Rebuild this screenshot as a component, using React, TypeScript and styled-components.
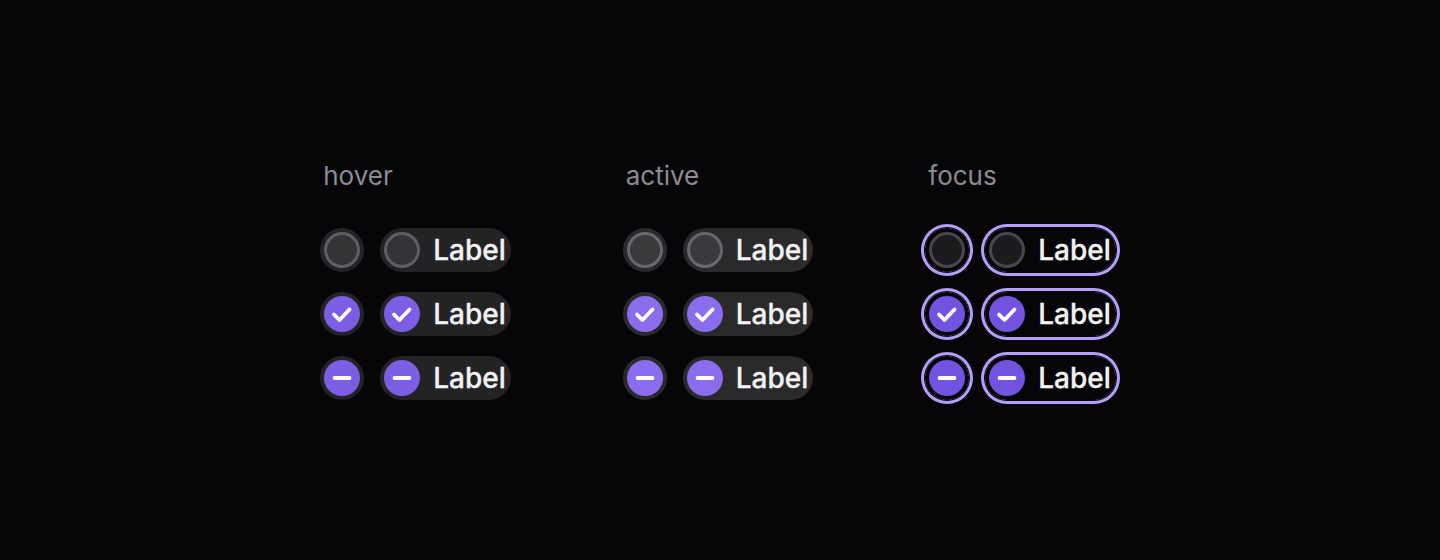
import React from 'react';
import styled, { createGlobalStyle, css } from 'styled-components';

type Variant = 'hover' | 'active' | 'focus';
type Check = 'unchecked' | 'checked' | 'indeterminate';

const PALETTE = {
  hover: { halo: '#232325', fill: '#343437', ring: '#5e5e62', purple: '#7d5de3' },
  active: { halo: '#2a2a2c', fill: '#3a3a3d', ring: '#68686c', purple: '#8a6cec' },
  focus: { halo: 'transparent', fill: '#1b1b1d', ring: '#48484c', purple: '#7452e0' },
} as const;

const FOCUS_RING = '#b39ff8';

const GlobalStyle = createGlobalStyle`
  html, body {
    margin: 0;
    padding: 0;
    background: #060608;
  }
  body {
    font-family: Inter, "Noto Sans", "Liberation Sans", sans-serif;
    -webkit-font-smoothing: antialiased;
  }
`;

const StyledPage = styled.div`
  min-height: 100vh;
  display: flex;
  align-items: center;
  justify-content: center;
  gap: 112px;
  padding-right: 4px;
  box-sizing: border-box;
`;

const StyledColumn = styled.section`
  display: flex;
  flex-direction: column;
`;

const StyledHeading = styled.h3`
  margin: 0 0 36px;
  padding-left: 3px;
  font-size: 26px;
  line-height: 32px;
  font-weight: 400;
  color: #8c8c91;
`;

const StyledRows = styled.div`
  display: flex;
  flex-direction: column;
  gap: 20px;
`;

const StyledRow = styled.div`
  display: flex;
  align-items: center;
  gap: 16px;
`;

const focusRing = css`
  box-shadow: 0 0 0 1px #060608, 0 0 0 4px ${FOCUS_RING};
`;

type VariantProps = { variant: Variant };

const StyledControl = styled.div<VariantProps>`
  width: 44px;
  height: 44px;
  border-radius: 50%;
  display: flex;
  align-items: center;
  justify-content: center;
  background: ${({ variant }) => PALETTE[variant].halo};
  ${({ variant }) => variant === 'focus' && focusRing}
`;

const StyledPill = styled.div<VariantProps>`
  height: 44px;
  box-sizing: border-box;
  padding: 4px 5px 4px 4px;
  border-radius: 22px;
  display: flex;
  align-items: center;
  gap: 13px;
  background: ${({ variant }) => PALETTE[variant].halo};
  ${({ variant }) => variant === 'focus' && focusRing}
`;

const StyledIndicator = styled.span<{ variant: Variant; check: Check }>`
  width: 36px;
  height: 36px;
  flex: none;
  box-sizing: border-box;
  border-radius: 50%;
  display: flex;
  align-items: center;
  justify-content: center;
  ${({ variant, check }) =>
    check === 'unchecked'
      ? css`
          background: ${PALETTE[variant].fill};
          border: 3px solid ${PALETTE[variant].ring};
        `
      : css`
          background: ${PALETTE[variant].purple};
        `}
`;

const StyledLabel = styled.span`
  font-size: 28px;
  font-weight: 500;
  line-height: 32px;
  color: #f2f2f4;
  -webkit-text-stroke: 0.3px #f2f2f4;
`;

const Mark: React.FC<{ check: Check }> = ({ check }) => {
  if (check === 'unchecked') return null;
  return (
    <svg width="36" height="36" viewBox="0 0 36 36" fill="none">
      {check === 'checked' ? (
        <path
          d="M10 18.5l5.5 5.5 10-10.5"
          stroke="#fff"
          strokeWidth="3.8"
          strokeLinecap="round"
          strokeLinejoin="round"
        />
      ) : (
        <path d="M10.5 18h15" stroke="#fff" strokeWidth="3.8" strokeLinecap="round" />
      )}
    </svg>
  );
};

const Indicator: React.FC<{ variant: Variant; check: Check }> = ({ variant, check }) => (
  <StyledIndicator variant={variant} check={check}>
    <Mark check={check} />
  </StyledIndicator>
);

const VARIANTS: Variant[] = ['hover', 'active', 'focus'];
const CHECKS: Check[] = ['unchecked', 'checked', 'indeterminate'];

const App: React.FC = () => (
  <>
    <GlobalStyle />
    <StyledPage>
      {VARIANTS.map((variant) => (
        <StyledColumn key={variant}>
          <StyledHeading>{variant}</StyledHeading>
          <StyledRows>
            {CHECKS.map((check) => (
              <StyledRow key={check}>
                <StyledControl variant={variant}>
                  <Indicator variant={variant} check={check} />
                </StyledControl>
                <StyledPill variant={variant}>
                  <Indicator variant={variant} check={check} />
                  <StyledLabel>Label</StyledLabel>
                </StyledPill>
              </StyledRow>
            ))}
          </StyledRows>
        </StyledColumn>
      ))}
    </StyledPage>
  </>
);

export default App;
